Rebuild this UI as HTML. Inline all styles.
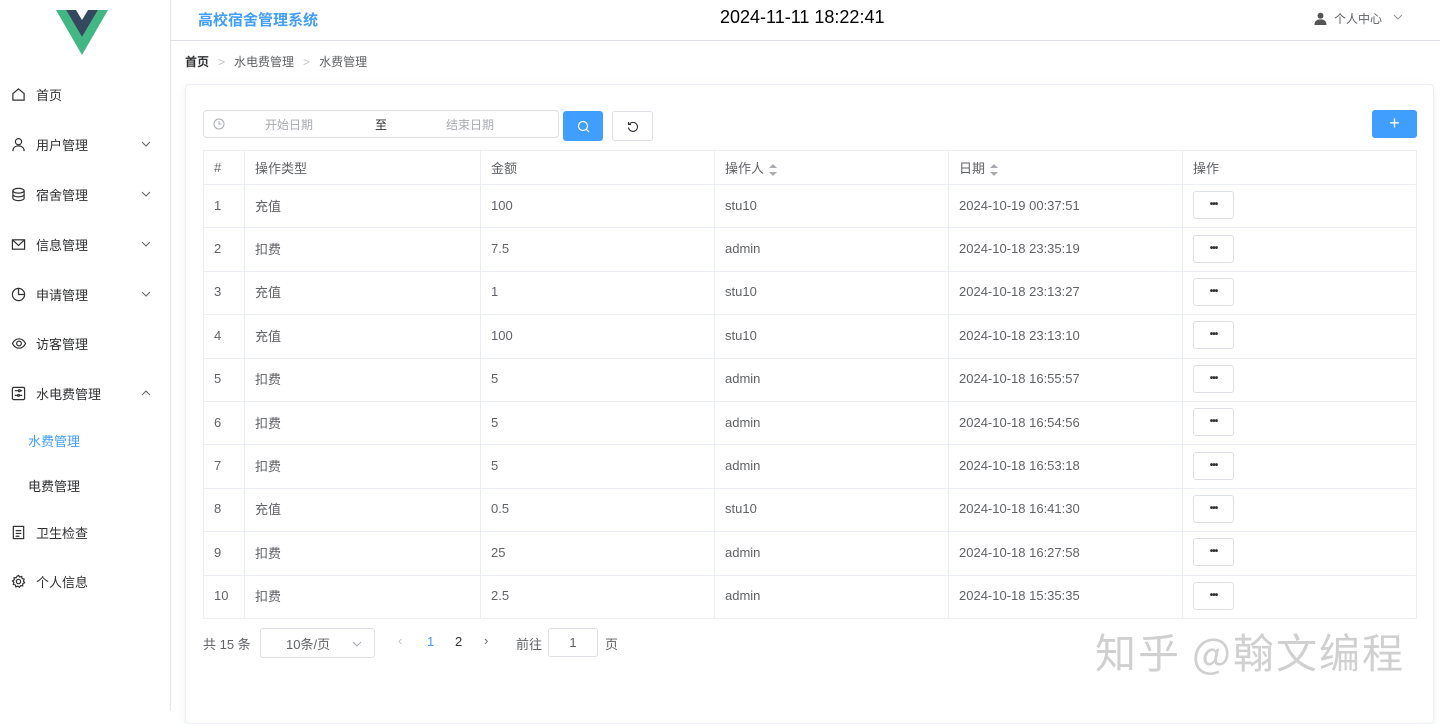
<!DOCTYPE html>
<html><head><meta charset="utf-8"><style>
*{box-sizing:border-box;margin:0;padding:0}
body{width:1440px;height:711px;overflow:hidden;background:#fff;font-family:"Liberation Sans","Noto Sans CJK SC",sans-serif;color:#303133;position:relative;font-size:13px}
.abs{position:absolute}
.side{left:0;top:0;width:171px;height:711px;border-right:1px solid #e6e6e6;background:#fff}
.mi{position:absolute;left:0;width:170px;height:20px;font-size:13px;color:#303133;display:flex;align-items:center}
.mi svg{position:absolute;left:11px}
.mi span{position:absolute;left:36px}
.mi .ar{position:absolute;left:141px}
.top{left:171px;top:0;width:1269px;height:41px;border-bottom:1px solid #dcdfe6}
.card{left:185px;top:84px;width:1249px;height:640px;border:1px solid #ebeef5;border-radius:4px;box-shadow:0 2px 10px rgba(0,0,0,.06);background:#fff}
table{position:absolute;left:203px;top:150px;border-collapse:collapse;width:1214px;font-size:13px}
td,th{border:1px solid #ebeef5;text-align:left;padding-left:10px;font-weight:normal}
th{height:34px;color:#606266}
td{height:43.4px;color:#606266;padding-bottom:2px}
.btn{display:inline-block;width:41px;height:28px;border:1px solid #dcdfe6;border-radius:3px;text-align:center;line-height:26px;font-weight:bold;color:#303133;font-size:10px;letter-spacing:-1px}
.sort{display:inline-block;vertical-align:middle;margin-left:5px;width:8px;height:12px;position:relative}
.sort:before{content:"";position:absolute;top:0;left:0;border:4px solid transparent;border-bottom:4px solid #a8abb2;border-top:0}
.sort:after{content:"";position:absolute;bottom:0;left:0;border:4px solid transparent;border-top:4px solid #a8abb2;border-bottom:0}
</style></head><body>
<div class="abs side">
<svg class="abs" style="left:56px;top:10px" width="52" height="45" viewBox="0 0 52 45"><path d="M0 0H10L26 27L42 0H52L26 45Z" fill="#41b883"/><path d="M10 0H20L26 10L32 0H42L26 27Z" fill="#35495e"/></svg>
<div class="mi" style="top:84px"><svg width="15" height="15" viewBox="0 0 16 16" fill="none" stroke="#303133" stroke-width="1.3"><path d="M2 7L8 2L14 7V14H2Z"/></svg><span>首页</span></div>
<div class="mi" style="top:134px"><svg width="15" height="15" viewBox="0 0 16 16" fill="none" stroke="#303133" stroke-width="1.3"><circle cx="8" cy="5" r="3.3"/><path d="M2 15C2 11 5 9.5 8 9.5S14 11 14 15"/></svg><span>用户管理</span><svg class="ar" width="10" height="10" viewBox="0 0 10 10" fill="none" stroke="#606266"><path d="M1 3L5 7L9 3"/></svg></div>
<div class="mi" style="top:184px"><svg width="15" height="15" viewBox="0 0 16 16" fill="none" stroke="#303133" stroke-width="1.3"><ellipse cx="8" cy="4" rx="6" ry="2.5"/><path d="M2 4V12C2 13.5 5 14.5 8 14.5S14 13.5 14 12V4M2 8C2 9.5 5 10.5 8 10.5S14 9.5 14 8"/></svg><span>宿舍管理</span><svg class="ar" width="10" height="10" viewBox="0 0 10 10" fill="none" stroke="#606266"><path d="M1 3L5 7L9 3"/></svg></div>
<div class="mi" style="top:234px"><svg width="15" height="15" viewBox="0 0 16 16" fill="none" stroke="#303133" stroke-width="1.3"><rect x="1.5" y="3" width="13" height="10"/><path d="M1.5 3L8 9L14.5 3"/></svg><span>信息管理</span><svg class="ar" width="10" height="10" viewBox="0 0 10 10" fill="none" stroke="#606266"><path d="M1 3L5 7L9 3"/></svg></div>
<div class="mi" style="top:284px"><svg width="15" height="15" viewBox="0 0 16 16" fill="none" stroke="#303133" stroke-width="1.3"><circle cx="8" cy="8" r="6.5"/><path d="M8 1.5V8H14.5"/></svg><span>申请管理</span><svg class="ar" width="10" height="10" viewBox="0 0 10 10" fill="none" stroke="#606266"><path d="M1 3L5 7L9 3"/></svg></div>
<div class="mi" style="top:333px"><svg width="16" height="15" viewBox="0 0 16 16" fill="none" stroke="#303133" stroke-width="1.3"><path d="M1 8C3 4 5.5 3 8 3S13 4 15 8C13 12 10.5 13 8 13S3 12 1 8Z"/><circle cx="8" cy="8" r="2.5"/></svg><span>访客管理</span></div>
<div class="mi" style="top:383px"><svg width="15" height="15" viewBox="0 0 16 16" fill="none" stroke="#303133" stroke-width="1.3"><rect x="1.5" y="1.5" width="13" height="13" rx="1.5"/><path d="M4 5H8M4 10H7M10 5H12M9 10H12"/><circle cx="9" cy="5" r="1"/><circle cx="8" cy="10" r="1"/></svg><span>水电费管理</span><svg class="ar" width="10" height="10" viewBox="0 0 10 10" fill="none" stroke="#606266"><path d="M1 7L5 3L9 7"/></svg></div>
<div class="mi" style="top:430px;color:#409eff"><span style="left:28px">水费管理</span></div>
<div class="mi" style="top:475px"><span style="left:28px">电费管理</span></div>
<div class="mi" style="top:522px"><svg width="15" height="15" viewBox="0 0 16 16" fill="none" stroke="#303133" stroke-width="1.3"><rect x="2.5" y="1.5" width="11" height="13"/><path d="M5 6H11M5 9H11M5 12H9"/></svg><span>卫生检查</span></div>
<div class="mi" style="top:571px"><svg width="15" height="15" viewBox="0 0 16 16" fill="none" stroke="#303133" stroke-width="1.3"><circle cx="8" cy="8" r="2.3"/><path d="M8 1.5L9.3 3.2L11.4 2.7L11.9 4.8L14 5.5L13.3 7.6L14.5 9.3L12.6 10.4L12.5 12.6L10.3 12.4L8.9 14.2L7.2 12.9L5.2 13.8L4.6 11.7L2.5 11.1L3.1 9L1.6 7.4L3.4 6.2L3.3 4L5.5 4L6.6 2.2Z"/></svg><span>个人信息</span></div>
</div>
<div class="abs top">
<div class="abs" style="left:27px;top:9px;font-size:15px;font-weight:bold;color:#409eff">高校宿舍管理系统</div>
<div class="abs" style="left:549px;top:7px;font-size:18px;color:#000">2024-11-11 18:22:41</div>
<svg class="abs" style="left:1143px;top:12px" width="13" height="13" viewBox="0 0 14 14" fill="#555"><circle cx="7" cy="4" r="3.2"/><path d="M0.5 14C0.5 9.5 3.5 8 7 8S13.5 9.5 13.5 14Z"/></svg>
<div class="abs" style="left:1163px;top:10px;font-size:12px;color:#606266">个人中心</div>
<svg class="abs" style="left:1222px;top:13px" width="10" height="8" viewBox="0 0 10 8" fill="none" stroke="#909399"><path d="M1 2L5 6L9 2"/></svg>
</div>
<div class="abs" style="left:185px;top:53px;font-size:12px;color:#606266"><b style="color:#303133">首页</b><span style="color:#c0c4cc;margin:0 9px">&gt;</span>水电费管理<span style="color:#c0c4cc;margin:0 9px">&gt;</span>水费管理</div>
<div class="abs card"></div>
<div class="abs" style="left:203px;top:110px;width:356px;height:28px;border:1px solid #dcdfe6;border-radius:4px;font-size:12px;color:#a8abb2">
<svg class="abs" style="left:9px;top:7px" width="12" height="12" viewBox="0 0 12 12" fill="none" stroke="#a8abb2"><circle cx="6" cy="6" r="5"/><path d="M6 3V6H8.5"/></svg>
<span class="abs" style="left:61px;top:5px">开始日期</span><span class="abs" style="left:171px;top:5px;color:#303133">至</span><span class="abs" style="left:242px;top:5px">结束日期</span></div>
<div class="abs" style="left:563px;top:111px;width:40px;height:30px;background:#409eff;border-radius:3px"><svg class="abs" style="left:14px;top:9px" width="13" height="13" viewBox="0 0 13 13" fill="none" stroke="#fff" stroke-width="1.2"><circle cx="6" cy="6" r="4.5"/><path d="M9.5 9.5L12 12"/></svg></div>
<div class="abs" style="left:612px;top:111px;width:41px;height:30px;border:1px solid #dcdfe6;border-radius:3px"><svg class="abs" style="left:14px;top:9px" width="12" height="12" viewBox="0 0 12 12" fill="none" stroke="#303133" stroke-width="1.1"><path d="M2.5 3A4.5 4.5 0 1 1 1.5 6.5"/><path d="M1.5 1V3.5H4"/></svg></div>
<div class="abs" style="left:1372px;top:110px;width:45px;height:28px;background:#409eff;border-radius:3px;color:#fff;text-align:center;font-size:18px;line-height:26px;font-weight:300">+</div>
<table>
<tr><th style="width:41px">#</th><th style="width:236px">操作类型</th><th style="width:234px">金额</th><th style="width:234px">操作人<i class="sort"></i></th><th style="width:234px">日期<i class="sort"></i></th><th>操作</th></tr>
<tr><td>1</td><td>充值</td><td>100</td><td>stu10</td><td>2024-10-19 00:37:51</td><td><span class="btn">•••</span></td></tr>
<tr><td>2</td><td>扣费</td><td>7.5</td><td>admin</td><td>2024-10-18 23:35:19</td><td><span class="btn">•••</span></td></tr>
<tr><td>3</td><td>充值</td><td>1</td><td>stu10</td><td>2024-10-18 23:13:27</td><td><span class="btn">•••</span></td></tr>
<tr><td>4</td><td>充值</td><td>100</td><td>stu10</td><td>2024-10-18 23:13:10</td><td><span class="btn">•••</span></td></tr>
<tr><td>5</td><td>扣费</td><td>5</td><td>admin</td><td>2024-10-18 16:55:57</td><td><span class="btn">•••</span></td></tr>
<tr><td>6</td><td>扣费</td><td>5</td><td>admin</td><td>2024-10-18 16:54:56</td><td><span class="btn">•••</span></td></tr>
<tr><td>7</td><td>扣费</td><td>5</td><td>admin</td><td>2024-10-18 16:53:18</td><td><span class="btn">•••</span></td></tr>
<tr><td>8</td><td>充值</td><td>0.5</td><td>stu10</td><td>2024-10-18 16:41:30</td><td><span class="btn">•••</span></td></tr>
<tr><td>9</td><td>扣费</td><td>25</td><td>admin</td><td>2024-10-18 16:27:58</td><td><span class="btn">•••</span></td></tr>
<tr><td>10</td><td>扣费</td><td>2.5</td><td>admin</td><td>2024-10-18 15:35:35</td><td><span class="btn">•••</span></td></tr>
</table>
<div class="abs" style="left:203px;top:634px;font-size:13px;color:#606266">共 15 条</div>
<div class="abs" style="left:260px;top:628px;width:115px;height:30px;border:1px solid #dcdfe6;border-radius:3px;font-size:13px;color:#606266"><span class="abs" style="left:25px;top:5px">10条/页</span><svg class="abs" style="left:91px;top:11px" width="10" height="8" viewBox="0 0 10 8" fill="none" stroke="#a8abb2"><path d="M1 2L5 6L9 2"/></svg></div>
<div class="abs" style="left:398px;top:633px;color:#c0c4cc;font-size:13px">&lsaquo;</div>
<div class="abs" style="left:427px;top:634px;color:#409eff;font-size:13px">1</div>
<div class="abs" style="left:455px;top:634px;color:#303133;font-size:13px">2</div>
<div class="abs" style="left:484px;top:633px;color:#606266;font-size:13px">&rsaquo;</div>
<div class="abs" style="left:516px;top:634px;color:#606266;font-size:13px">前往</div>
<div class="abs" style="left:548px;top:628px;width:50px;height:29px;border:1px solid #dcdfe6;border-radius:3px;text-align:center;line-height:27px;color:#606266">1</div>
<div class="abs" style="left:605px;top:634px;color:#606266;font-size:13px">页</div>
<div class="abs" style="left:1095px;top:620px;font-size:41px;color:rgba(120,120,120,0.35);font-family:'Noto Sans CJK SC',sans-serif;letter-spacing:2px">知乎 @翰文编程</div>
</body></html>
